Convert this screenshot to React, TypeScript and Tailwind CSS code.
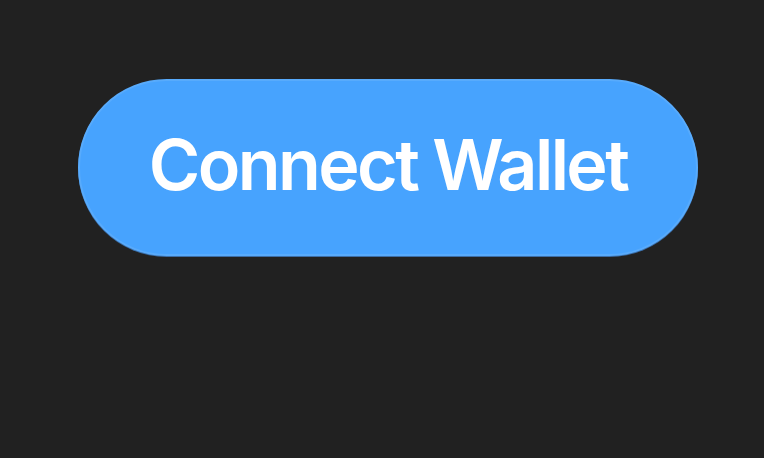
export default function App() {
  return (
    <div className="h-[458px] w-full bg-[#212121] pl-[78px] pt-[79px]">
      <button
        className="flex h-[177px] w-[620px] items-center justify-center rounded-full border-2 border-[#58abfc] bg-[#47a3fe] pb-[6px] text-[70px] font-semibold tracking-[-0.037em] text-white shadow-[0_1px_0_#3b6ea8]"
        style={{ fontFamily: "Inter, 'Liberation Sans', sans-serif" }}
      >
        Connect Wallet
      </button>
    </div>
  );
}
